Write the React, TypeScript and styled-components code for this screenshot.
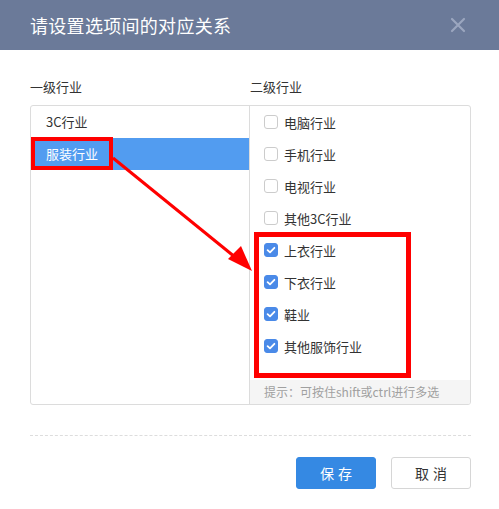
import React from "react";
import styled, { createGlobalStyle } from "styled-components";

const GlobalStyle = createGlobalStyle`
  html, body {
    margin: 0;
    padding: 0;
    background: #ffffff;
  }
  body {
    font-family: "Noto Sans CJK SC", "Open Sans", "Liberation Sans", sans-serif;
  }
`;

const Dialog = styled.div`
  position: relative;
  width: 499px;
  height: 509px;
  background: #ffffff;
  display: flex;
  flex-direction: column;
  overflow: hidden;
`;

const Header = styled.div`
  height: 50px;
  background: #6b7a99;
  display: flex;
  align-items: center;
  justify-content: space-between;
  padding: 0 30px;
  flex-shrink: 0;
`;

const Title = styled.h2`
  margin: 0;
  font-size: 18px;
  font-weight: normal;
  color: #ffffff;
  letter-spacing: 0.3px;
`;

const CloseButton = styled.button`
  border: none;
  background: none;
  padding: 0;
  margin-right: 1px;
  width: 20px;
  height: 20px;
  display: flex;
  align-items: center;
  justify-content: center;
  cursor: pointer;
`;

const Body = styled.div`
  padding: 27px 28px 0 30px;
  display: flex;
  flex-direction: column;
`;

const Labels = styled.div`
  display: grid;
  grid-template-columns: 220px 1fr;
  height: 20px;
  line-height: 20px;
  font-size: 13px;
  color: #333;
  margin-bottom: 8px;
`;

const Panel = styled.div`
  display: grid;
  grid-template-columns: 219px 1fr;
  height: 300px;
  border: 1px solid #dcdcdc;
  border-radius: 3px;
  box-sizing: border-box;
  overflow: hidden;
`;

const LeftList = styled.div`
  border-right: 1px solid #dcdcdc;
`;

const LeftItem = styled.div<{ $active?: boolean }>`
  height: 32px;
  line-height: 32px;
  padding-left: 15px;
  font-size: 13px;
  color: ${({ $active }) => ($active ? "#ffffff" : "#333")};
  background: ${({ $active }) => ($active ? "#529cf0" : "transparent")};
`;

const RightCol = styled.div`
  display: flex;
  flex-direction: column;
`;

const RightList = styled.div`
  flex: 1;
`;

const CheckRow = styled.label`
  height: 32px;
  display: flex;
  align-items: center;
  gap: 6px;
  padding-left: 14px;
  font-size: 13px;
  color: #333;
`;

const Box = styled.span<{ $checked?: boolean }>`
  width: 14px;
  height: 14px;
  box-sizing: border-box;
  border-radius: 3px;
  border: 1px solid ${({ $checked }) => ($checked ? "#4a8ae8" : "#cccccc")};
  background: ${({ $checked }) => ($checked ? "#4a8ae8" : "#ffffff")};
  display: flex;
  align-items: center;
  justify-content: center;
`;

const Hint = styled.div`
  height: 24px;
  line-height: 24px;
  background: #f5f5f5;
  padding-left: 14px;
  font-size: 12px;
  color: #a0a0a0;
`;

const Divider = styled.div`
  margin-top: 30px;
  border-top: 1px dashed #dddddd;
`;

const Footer = styled.div`
  display: flex;
  justify-content: flex-end;
  gap: 15px;
  margin-top: 21px;
`;

const Button = styled.button<{ $primary?: boolean }>`
  width: 80px;
  height: 32px;
  box-sizing: border-box;
  border-radius: 3px;
  font-family: inherit;
  font-size: 14px;
  letter-spacing: 4px;
  text-indent: 4px;
  border: 1px solid ${({ $primary }) => ($primary ? "#3589e3" : "#d6d6d6")};
  background: ${({ $primary }) => ($primary ? "#3589e3" : "#ffffff")};
  color: ${({ $primary }) => ($primary ? "#ffffff" : "#333")};
  cursor: pointer;
`;

const Annotation = styled.svg`
  position: absolute;
  left: 0;
  top: 0;
  pointer-events: none;
`;

const Check = () => (
  <svg width="10" height="10" viewBox="0 0 10 10">
    <path d="M1.6 5.2 L4 7.4 L8.4 2.8" fill="none" stroke="#fff" strokeWidth="1.8" strokeLinecap="round" strokeLinejoin="round" />
  </svg>
);

const secondLevel = [
  { name: "电脑行业", checked: false },
  { name: "手机行业", checked: false },
  { name: "电视行业", checked: false },
  { name: "其他3C行业", checked: false },
  { name: "上衣行业", checked: true },
  { name: "下衣行业", checked: true },
  { name: "鞋业", checked: true },
  { name: "其他服饰行业", checked: true },
];

export default function App() {
  return (
    <>
      <GlobalStyle />
      <Dialog>
        <Header>
          <Title>请设置选项间的对应关系</Title>
          <CloseButton>
            <svg width="16" height="16" viewBox="0 0 16 16">
              <path d="M2 2 L14 14 M14 2 L2 14" stroke="#9ba6bf" strokeWidth="2.2" strokeLinecap="round" />
            </svg>
          </CloseButton>
        </Header>
        <Body>
          <Labels>
            <span>一级行业</span>
            <span>二级行业</span>
          </Labels>
          <Panel>
            <LeftList>
              <LeftItem>3C行业</LeftItem>
              <LeftItem $active>服装行业</LeftItem>
            </LeftList>
            <RightCol>
              <RightList>
                {secondLevel.map((item) => (
                  <CheckRow key={item.name}>
                    <Box $checked={item.checked}>{item.checked && <Check />}</Box>
                    {item.name}
                  </CheckRow>
                ))}
              </RightList>
              <Hint>提示：可按住shift或ctrl进行多选</Hint>
            </RightCol>
          </Panel>
          <Divider />
          <Footer>
            <Button $primary>保存</Button>
            <Button>取消</Button>
          </Footer>
        </Body>
        <Annotation width="499" height="509" viewBox="0 0 499 509">
          <rect x="33" y="139" width="78" height="29" fill="none" stroke="#ff0000" strokeWidth="4" />
          <rect x="256.5" y="234.5" width="152" height="141" fill="none" stroke="#ff0000" strokeWidth="5" />
          <line x1="113" y1="158" x2="246" y2="266" stroke="#ff0000" strokeWidth="3" />
          <path d="M252 271 L228 259 L241 246 Z" fill="#ff0000" />
        </Annotation>
      </Dialog>
    </>
  );
}
